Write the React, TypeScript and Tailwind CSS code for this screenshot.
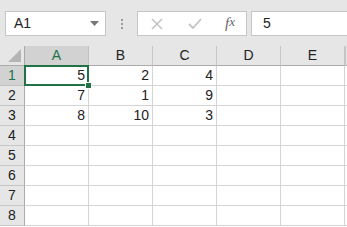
import React from 'react'

const cols = ['A', 'B', 'C', 'D', 'E']
const data: (number | null)[][] = [
    [5, 2, 4, null, null],
    [7, 1, 9, null, null],
    [8, 10, 3, null, null],
    [null, null, null, null, null],
    [null, null, null, null, null],
    [null, null, null, null, null],
    [null, null, null, null, null],
    [null, null, null, null, null],
]

export default function App() {
    return (
        <div className="w-[347px] h-[227px] overflow-hidden bg-white text-[#222] font-['Liberation_Sans',Arial,sans-serif]">
            {/* formula bar */}
            <div className="h-[46px] bg-[#e6e6e6] flex items-start pt-[11px] pl-[5px]">
                <div className="w-[101px] h-[25px] bg-white border border-[#c6c6c6] flex items-center justify-between pl-[8px] pr-[6px] text-[14px]">
                    <span>A1</span>
                    <svg width="9" height="5" viewBox="0 0 9 5"><path d="M0 0h9L4.5 5z" fill="#777" /></svg>
                </div>
                <div className="w-[31px] h-[25px] flex flex-col items-center justify-center gap-[2px]">
                    <span className="w-[2px] h-[2px] bg-[#9a9a9a]" />
                    <span className="w-[2px] h-[2px] bg-[#9a9a9a]" />
                    <span className="w-[2px] h-[2px] bg-[#9a9a9a]" />
                </div>
                <div className="w-[110px] h-[25px] bg-white border border-[#c6c6c6] flex items-center">
                    <div className="w-[38px] flex justify-center">
                        <svg width="12" height="12" viewBox="0 0 12 12"><path d="M1 1l10 10M11 1L1 11" stroke="#c4c4c4" strokeWidth="1.6" /></svg>
                    </div>
                    <div className="w-[38px] flex justify-center">
                        <svg width="14" height="11" viewBox="0 0 14 11"><path d="M1 6l4 4L13 1" stroke="#c4c4c4" strokeWidth="1.8" fill="none" /></svg>
                    </div>
                    <div className="w-[32px] flex justify-center text-[15px] italic text-[#666] font-['Liberation_Serif',serif]">
                        f<span className="text-[13px]">x</span>
                    </div>
                </div>
                <div className="ml-[4px] flex-1 h-[25px] bg-white border border-[#c6c6c6] border-r-0 flex items-center pl-[11px] text-[14px]">
                    5
                </div>
            </div>

            {/* grid */}
            <div className="grid grid-cols-[25px_64px_64px_64px_64px_64px_1fr] text-[14px]">
                <div className="h-[20px] bg-[#e6e6e6] border-r border-b border-[#ababab] flex items-end justify-end pr-[3px] pb-[3px]">
                    <svg width="13" height="13" viewBox="0 0 13 13"><path d="M13 0v13H0z" fill="#b5b5b5" /></svg>
                </div>
                {cols.map((c, i) => (
                    <div
                        key={c}
                        className={`h-[20px] border-r border-b flex items-center justify-center ${i === 0 ? 'bg-[#d2d2d2] border-b-[#ababab] border-r-[#c0c0c0] text-[#217346]' : 'bg-[#e6e6e6] border-b-[#ababab] border-r-[#c6c6c6]'}`}
                    >
                        {c}
                    </div>
                ))}
                <div className="h-[20px] bg-[#e6e6e6] border-b border-[#ababab] border-l border-l-[#c6c6c6]" />

                {data.map((row, r) => (
                    <React.Fragment key={r}>
                        <div className={`h-[20px] border-r border-b border-r-[#ababab] flex items-center justify-center ${r === 0 ? 'bg-[#d2d2d2] border-b-[#c0c0c0] text-[#217346]' : 'bg-[#e6e6e6] border-b-[#c6c6c6]'}`}>
                            {r + 1}
                        </div>
                        {row.map((v, c) => (
                            <div key={c} className={`relative h-[20px] border-r border-b border-[#d4d4d4] flex items-center justify-end pr-[3px] ${r === 0 && c === 0 ? 'z-10' : ''}`}>
                                {v}
                                {r === 0 && c === 0 && (
                                    <>
                                        <div className="absolute -left-px -top-px right-[-1px] bottom-[-1px] border-2 border-[#217346]" />
                                        <div className="absolute right-[-4px] bottom-[-4px] w-[7px] h-[7px] bg-[#217346] border border-white" />
                                    </>
                                )}
                            </div>
                        ))}
                        <div className="h-[20px] border-b border-[#d4d4d4]" />
                    </React.Fragment>
                ))}
            </div>
        </div>
    )
}
